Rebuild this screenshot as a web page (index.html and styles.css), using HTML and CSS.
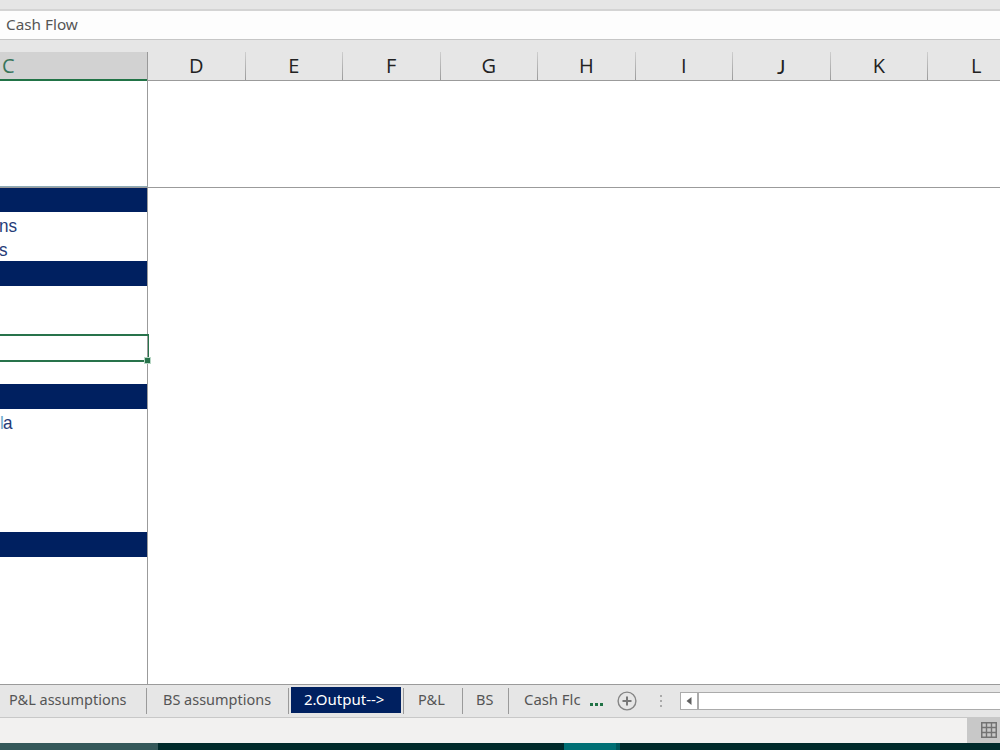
FILE: index.html
```
<!DOCTYPE html>
<html lang="en">
<head>
    <meta charset="UTF-8">
    <meta name="viewport" content="width=device-width, initial-scale=1.0">
    <title>Cash Flow</title>
    <link rel="stylesheet" href="styles.css">
</head>
<body>
    <div class="ribbon-edge"></div>
    <div class="formula-bar"><span>Cash Flow</span></div>

    <div class="columns">
        <div class="col col-c selected"><span>C</span></div>
        <div class="col"><span>D</span></div>
        <div class="col"><span>E</span></div>
        <div class="col"><span>F</span></div>
        <div class="col"><span>G</span></div>
        <div class="col"><span>H</span></div>
        <div class="col"><span>I</span></div>
        <div class="col col-j"><span>J</span></div>
        <div class="col"><span>K</span></div>
        <div class="col"><span>L</span></div>
    </div>

    <div class="frozen">
        <div class="frozen-c"></div>
    </div>

    <div class="sheet">
        <div class="rows">
            <div class="row band first"></div>
            <div class="row"><span>ns</span></div>
            <div class="row"><span>s</span></div>
            <div class="row band"></div>
            <div class="row"></div>
            <div class="row"></div>
            <div class="row active"><div class="selection"><i class="handle"></i></div></div>
            <div class="row"></div>
            <div class="row band"></div>
            <div class="row"><span class="cut"><b>l</b>a</span></div>
            <div class="row"></div>
            <div class="row"></div>
            <div class="row"></div>
            <div class="row"></div>
            <div class="row band"></div>
        </div>
    </div>

    <div class="tabs">
        <div class="tab tab-pl-assump"><span>P&amp;L assumptions</span></div>
        <div class="tab tab-bs-assump"><span>BS assumptions</span></div>
        <div class="tab tab-output"><span>2.Output--&gt;</span></div>
        <div class="tab tab-pl"><span>P&amp;L</span></div>
        <div class="tab tab-bs"><span>BS</span></div>
        <div class="tab tab-cash"><span>Cash Flc</span></div>
        <div class="more"><i></i><i></i><i></i></div>
        <svg class="add" width="20" height="20" viewBox="0 0 20 20">
            <circle cx="10" cy="10" r="8.9" fill="none" stroke="#858585" stroke-width="1.4"/>
            <path d="M10 5.5v9M5.5 10h9" stroke="#777" stroke-width="2"/>
        </svg>
        <div class="grip"><i></i><i></i><i></i></div>
        <div class="scrollbar">
            <div class="scroll-left">
                <svg width="6" height="8" viewBox="0 0 6 8"><path d="M5.5 0v8L0.5 4z" fill="#606060"/></svg>
            </div>
            <div class="scroll-thumb"></div>
        </div>
    </div>

    <div class="status">
        <div class="view-btn">
            <svg width="16" height="16" viewBox="0 0 16 16" fill="none" stroke="#737373">
                <path d="M.75.75h14.5v14.5H.75z" stroke-width="1.5"/>
                <path d="M5.5 1v14M10.5 1v14M1 5.5h14M1 10.5h14" stroke-width="1.4"/>
            </svg>
        </div>
    </div>

    <div class="taskbar">
        <div class="task-search"></div>
        <div class="task-active"></div>
    </div>
</body>
</html>
```
FILE: styles.css
```
* {
    box-sizing: border-box;
}
body {
    display: flex;
    flex-direction: column;
    width: 1000px;
    height: 750px;
    margin: 0;
    overflow: hidden;
    background: #fff;
    font-family: 'Noto Sans', 'Open Sans', sans-serif;
}
.ribbon-edge {
    height: 11px;
    background: #e6e6e6;
    border-bottom: 2px solid #d4d4d4;
}
.formula-bar {
    height: 29px;
    padding-left: 6px;
    line-height: 26px;
    background: #fdfdfd;
    border-bottom: 1px solid #c6c6c6;
    color: #555;
    font-size: 15px;
}
.formula-bar span {
    display: inline-block;
    transform: scaleX(1.02);
    transform-origin: left;
}
.columns {
    display: flex;
    height: 41px;
    padding-top: 12px;
    background: #e6e6e6;
    border-bottom: 1px solid #9b9b9b;
}
.col {
    flex: none;
    width: 97.5px;
    height: 28px;
    line-height: 28px;
    text-align: center;
    font-family: 'Open Sans', sans-serif;
    font-size: 20px;
    color: #222;
    border-right: 1px solid;
    border-image: linear-gradient(#d0d0d0, #999) 1;
}
.col-c {
    width: 148px;
    height: 29px;
    padding-left: 2px;
    text-align: left;
    border-right: 1px solid #999;
    border-image: none;
}
.col-j {
    font-family: Lato, sans-serif;
}
.col.selected {
    color: #38755a;
    background: #d2d2d2;
    box-shadow: inset 0 -2px #217346;
}
.frozen {
    height: 107px;
    border-bottom: 1px solid #9b9b9b;
}
.frozen-c {
    width: 148px;
    height: 106px;
    border-right: 1px solid #9b9b9b;
    border-bottom: 1px solid #8eabb6;
}
.sheet {
    height: 497px;
    border-bottom: 1px solid #9b9b9b;
}
.rows {
    width: 148px;
    height: 496px;
    border-right: 1px solid #9b9b9b;
}
.row {
    height: 24.667px;
    line-height: 27px;
    font-family: 'Liberation Sans', sans-serif;
    font-size: 19px;
    color: #253b78;
}
.row span {
    display: inline-block;
    margin-left: -1px;
    transform: scaleX(0.9);
    transform-origin: left;
}
.row .cut {
    margin-left: 0;
    letter-spacing: -1px;
}
.cut b {
    font-weight: normal;
    color: #6ba8cc;
}
.band {
    background: #002060;
}
.row.first {
    height: 23.667px;
}
.active {
    position: relative;
}
.selection {
    position: absolute;
    left: 0;
    top: -1px;
    width: 149px;
    height: 28px;
    border: solid #28734b;
    border-width: 2px 1px 2px 0;
}
.handle {
    position: absolute;
    right: -3px;
    bottom: -4px;
    width: 7px;
    height: 7px;
    background: #28734b;
    border: 1px solid #b8d7c5;
}
.tabs {
    display: flex;
    height: 33px;
    background: #e6e6e6;
    border-bottom: 1px solid #c8c8c8;
    color: #555;
    font-size: 15px;
}
.tab {
    flex: none;
    height: 26px;
    margin-top: 3px;
    line-height: 23px;
    white-space: nowrap;
    border-right: 1px solid #9a9a9a;
}
.tab span {
    display: inline-block;
    transform: scaleX(0.965);
    transform-origin: left;
}
.tab-pl-assump {
    width: 147px;
    padding-left: 9px;
}
.tab-bs-assump {
    width: 142px;
    padding-left: 16px;
}
.tab-output {
    width: 110px;
    margin: 2px 2px 0;
    padding-left: 13px;
    line-height: 25px;
    color: #fff;
    background: #002060;
    border: 0;
}
.tab-output span {
    transform: scaleX(1);
}
.tab-pl {
    width: 60px;
    padding-left: 14px;
    border-left: 1px solid #9a9a9a;
}
.tab-bs {
    width: 46px;
    padding-left: 13px;
}
.tab-cash {
    width: 80px;
    padding-left: 15px;
    border: 0;
}
.tab-cash span {
    transform: scaleX(0.99);
}
.more {
    display: flex;
    gap: 2px;
    margin: 18px 0 0 1px;
}
.more i {
    width: 3px;
    height: 3px;
    background: #217346;
}
.add {
    margin: 6px 0 0 14px;
}
.grip {
    display: flex;
    flex-direction: column;
    gap: 3px;
    margin: 10px 0 0 23px;
}
.grip i {
    width: 2px;
    height: 2px;
    background: #aaa;
}
.scrollbar {
    display: flex;
    flex: 1;
    height: 18px;
    margin: 7px 0 0 18px;
    background: #fff;
    border: 1px solid #ababab;
    border-right: 0;
}
.scroll-left {
    display: flex;
    align-items: center;
    justify-content: center;
    width: 16px;
}
.scroll-thumb {
    flex: 1;
    border-left: 2px solid #ababab;
}
.status {
    display: flex;
    justify-content: flex-end;
    height: 25px;
    background: #f2f1f0;
}
.view-btn {
    width: 33px;
    padding: 3px 0 0 14px;
    background: #c8c8c8;
}
.taskbar {
    display: flex;
    height: 7px;
    background: #002a2b;
}
.task-search {
    width: 158px;
    background: #35585a;
}
.task-active {
    width: 56px;
    margin-left: 406px;
    background: #006f74;
    border-right: 4px solid #00575b;
}
```
